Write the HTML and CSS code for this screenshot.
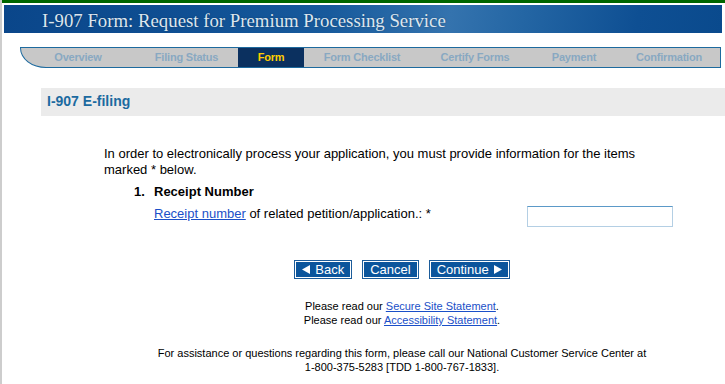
FILE: index.html
```html
<!DOCTYPE html>
<html lang="en">
<head>
    <meta charset="UTF-8">
    <title>I-907 Form: Request for Premium Processing Service</title>
    <link rel="stylesheet" href="styles.css">
</head>
<body>
    <div class="page">
        <div class="topline"></div>

        <div class="banner">
            <h1>I-907 Form: Request for Premium Processing Service</h1>
        </div>

        <ul class="steps">
            <li class="step-overview">Overview</li>
            <li class="step-status">Filing Status</li>
            <li class="step-form active">Form</li>
            <li class="step-checklist">Form Checklist</li>
            <li class="step-certify">Certify Forms</li>
            <li class="step-payment">Payment</li>
            <li class="step-confirm">Confirmation</li>
        </ul>

        <div class="section-title">I-907 E-filing</div>

        <div class="content">
            <p class="intro">In order to electronically process your application, you must provide information for the items marked * below.</p>

            <div class="item"><span class="num">1.</span>Receipt Number</div>

            <div class="field-row">
                <label for="receipt"><a href="#">Receipt number</a> of related petition/application.: *</label>
                <input type="text" id="receipt" autofocus>
            </div>
        </div>

        <div class="centered">
            <div class="buttons">
                <button class="btn"><svg width="8" height="9" viewBox="0 0 8 9"><path d="M8 0 L8 9 L0 4.5 Z" fill="#fff"/></svg>Back</button>
                <button class="btn">Cancel</button>
                <button class="btn">Continue<svg width="8" height="9" viewBox="0 0 8 9"><path d="M0 0 L0 9 L8 4.5 Z" fill="#fff"/></svg></button>
            </div>

            <div class="footer">
                <p>Please read our <a href="#">Secure Site Statement</a>.<br>
                Please read our <a href="#">Accessibility Statement</a>.</p>
                <p>For assistance or questions regarding this form, please call our National Customer Service Center at<br>
                1-800-375-5283 [TDD 1-800-767-1833].</p>
            </div>
        </div>
    </div>
</body>
</html>
```

FILE: styles.css
```css
html, body {
    margin: 0;
    padding: 0;
    background-color: #fff;
}
body {
    font-family: "Liberation Sans", Arial, sans-serif;
    color: #000;
    overflow: hidden;
}
.page {
    min-height: 384px;
    border-left: 2px solid #cdcdcd;
    box-sizing: border-box;
}
.topline {
    height: 3px;
    background-color: #006600;
}
.banner {
    height: 28px;
    margin: 2px 3px 0 2px;
    overflow: hidden;
    background: linear-gradient(100deg, #0a468a 0%, #0f4f93 25%, #175a9c 45%, #3473ae 62%, #2466a4 72%, #0e4f93 88%, #0a4a8d 100%);
}
.banner h1 {
    margin: 0;
    padding-left: 38px;
    font-family: "Liberation Serif", "Times New Roman", serif;
    font-size: 18.8px;
    font-weight: normal;
    line-height: 32px;
    color: #dce6ef;
    text-shadow: 0 0 2px rgba(0,0,0,0.3);
}
.steps {
    display: flex;
    list-style: none;
    margin: 14px 0 0 18px;
    padding: 0;
    width: 701px;
    height: 21px;
    box-sizing: border-box;
    border: 1px solid #1d6a9e;
    border-bottom-left-radius: 26px 20px;
    background-color: #c8c8c8;
    overflow: hidden;
}
.steps li {
    font-size: 11px;
    font-weight: bold;
    line-height: 19px;
    text-align: center;
    color: #88a8c2;
    letter-spacing: -0.2px;
}
.step-overview { width: 114px; }
.step-status { width: 103px; }
.step-form { width: 66px; }
.step-checklist { width: 116px; }
.step-certify { width: 110px; }
.step-payment { width: 88px; }
.step-confirm { width: 102px; }
.steps li.active {
    background-color: #0b305f;
    color: #ffcc00;
}
.section-title {
    margin: 20px 0 0 39px;
    height: 28px;
    padding-left: 6px;
    background-color: #ebebeb;
    font-size: 14px;
    font-weight: bold;
    line-height: 27px;
    color: #1b6aa0;
}
.content {
    padding: 30px 0 0 102px;
    font-size: 13px;
    line-height: 16px;
}
.intro {
    margin: 0;
    width: 560px;
}
.item {
    margin: 6px 0 0 30px;
    font-weight: bold;
}
.item .num {
    display: inline-block;
    width: 20px;
}
.field-row {
    display: flex;
    align-items: flex-start;
    margin: 6px 0 0 50px;
}
.field-row label {
    width: 373px;
}
a {
    color: #1a4fc8;
}
.field-row input {
    width: 146px;
    height: 21px;
    box-sizing: border-box;
    margin: 0;
    padding: 1px 3px;
    border: 1px solid #b4cfe4;
    border-top-color: #5b99c8;
    font-family: inherit;
    font-size: 13px;
    outline: none;
}
.centered {
    padding-left: 77px;
    text-align: center;
}
.buttons {
    display: flex;
    justify-content: center;
    gap: 10px;
    margin-top: 33px;
}
.btn {
    display: flex;
    align-items: center;
    gap: 5px;
    height: 19px;
    padding: 0 7px;
    border: 1px solid #1c5c9a;
    box-shadow: inset 0 0 0 1px #fff;
    background-color: #0b559c;
    color: #fff;
    font-family: inherit;
    font-size: 13px;
    line-height: 15px;
    cursor: pointer;
}
.btn svg {
    display: block;
}
.footer {
    margin-top: 20px;
    font-size: 11px;
    line-height: 14px;
}
.footer p {
    margin: 0 0 19px;
}
```
